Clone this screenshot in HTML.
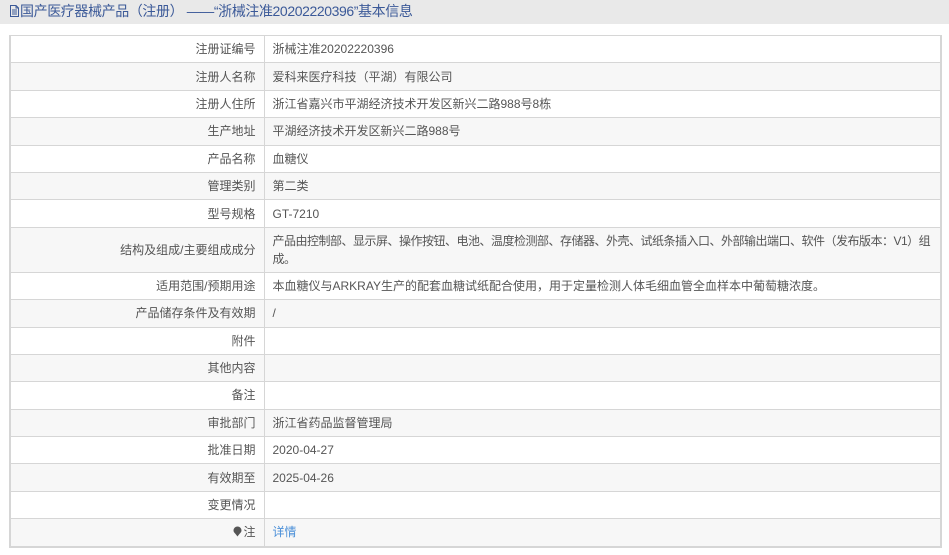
<!DOCTYPE html>
<html><head><meta charset="utf-8"><style>
body{margin:0;background:#fff;font-family:"Liberation Sans","Noto Sans CJK SC",sans-serif;width:949px;height:555px;overflow:hidden}
.hd{height:24px;background:#e9e9e9;color:#3b5998;font-size:14px;line-height:22px;padding-left:9px;white-space:nowrap;letter-spacing:-0.4px}
table{position:absolute;left:9px;top:35px;width:933px;border-collapse:collapse;table-layout:fixed;font-size:12px;color:#555;border:2px solid #d6d6d6;border-top:1px solid #d6d6d6}
td{border:1px solid #d6d6d6;height:26.4px;padding:0 8px;line-height:18px;overflow:hidden}
td.l{text-align:right;padding-right:8px}
tr:nth-child(even){background:#f7f7f7}
a{color:#4a8fd8;text-decoration:none}
</style></head><body>
<div class="hd"><svg width="11" height="12" viewBox="0 0 11 12" style="vertical-align:-1px"><path d="M1.5 .5h5.5l2.5 2.5v8.5h-8z M7 .5v2.5h2.5 M3 5h5M3 7h5M3 9h5" fill="none" stroke="#3b5998"/></svg>国产医疗器械产品（注册） ——“浙械注准20202220396”基本信息</div>
<table>
<colgroup><col style="width:254px"><col></colgroup>
<tr><td class="l">注册证编号</td><td>浙械注准20202220396</td></tr>
<tr><td class="l">注册人名称</td><td>爱科来医疗科技（平湖）有限公司</td></tr>
<tr><td class="l">注册人住所</td><td>浙江省嘉兴市平湖经济技术开发区新兴二路988号8栋</td></tr>
<tr><td class="l">生产地址</td><td>平湖经济技术开发区新兴二路988号</td></tr>
<tr><td class="l">产品名称</td><td>血糖仪</td></tr>
<tr><td class="l">管理类别</td><td>第二类</td></tr>
<tr><td class="l">型号规格</td><td>GT-7210</td></tr>
<tr><td class="l" style="height:44px">结构及组成/主要组成成分</td><td style="white-space:nowrap;letter-spacing:-0.5px">产品由控制部、显示屏、操作按钮、电池、温度检测部、存储器、外壳、试纸条插入口、外部输出端口、软件（发布版本：V1）组<br>成。</td></tr>
<tr><td class="l">适用范围/预期用途</td><td>本血糖仪与ARKRAY生产的配套血糖试纸配合使用，用于定量检测人体毛细血管全血样本中葡萄糖浓度。</td></tr>
<tr><td class="l">产品储存条件及有效期</td><td>/</td></tr>
<tr><td class="l">附件</td><td></td></tr>
<tr><td class="l">其他内容</td><td></td></tr>
<tr><td class="l">备注</td><td></td></tr>
<tr><td class="l">审批部门</td><td>浙江省药品监督管理局</td></tr>
<tr><td class="l">批准日期</td><td>2020-04-27</td></tr>
<tr><td class="l">有效期至</td><td>2025-04-26</td></tr>
<tr><td class="l">变更情况</td><td></td></tr>
<tr><td class="l"><svg width="9" height="11" viewBox="0 0 9 11" style="vertical-align:-1px;margin-right:1px"><path d="M4.5 .5a4 4 0 0 1 4 4c0 2-2 3-4 6c-2-3-4-4-4-6a4 4 0 0 1 4-4z" fill="#555"/></svg>注</td><td><a>详情</a></td></tr>
</table>
</body></html>
